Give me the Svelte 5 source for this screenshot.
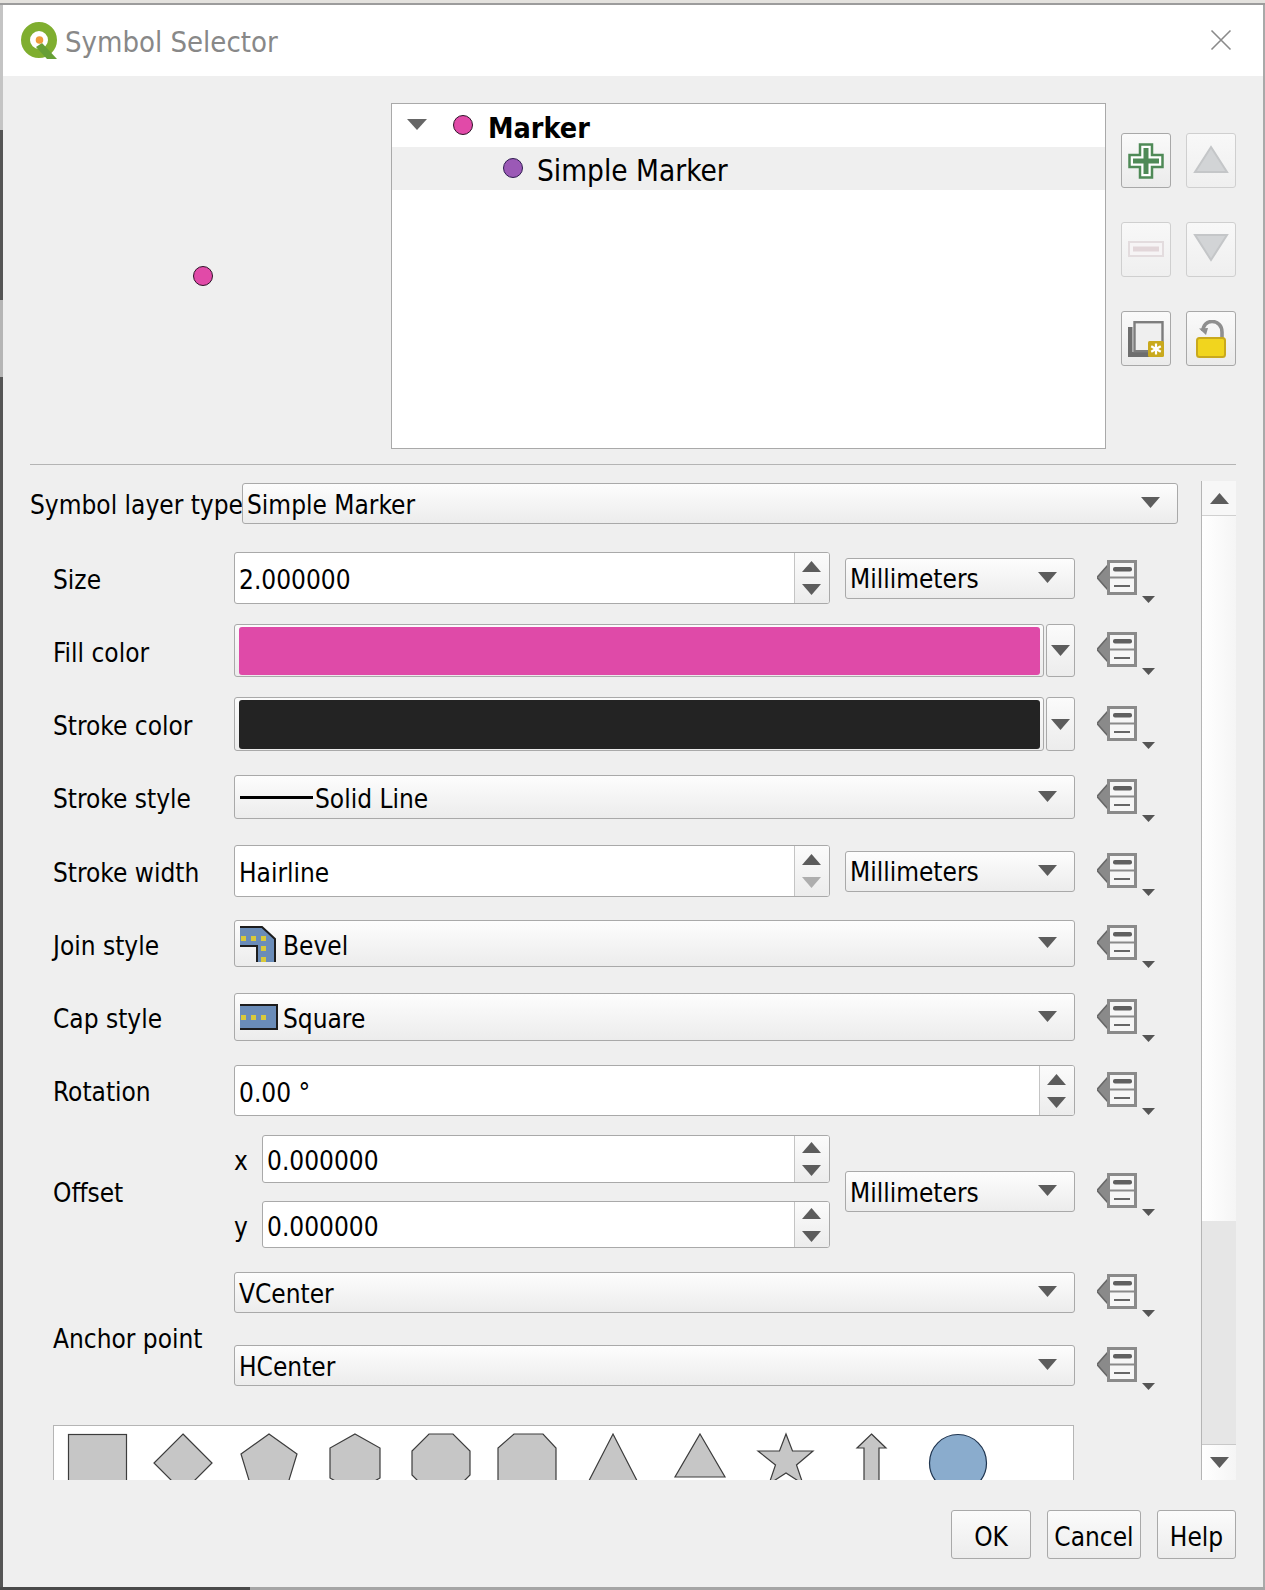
<script>
  const units = ['Millimeters'];
  const stars = '786,1434 792.5,1451 813,1451 796.5,1465 803,1484 786,1473 769,1484 775.5,1465 758,1451 779.5,1451';
</script>

{#snippet arrow(cls = '')}
  <svg class="arrow {cls}" width="19" height="11" viewBox="0 0 19 11"><path d="M0 0H19L9.5 11Z" /></svg>
{/snippet}

{#snippet upArrow(cls = '')}
  <svg class="arrow {cls}" width="19" height="11" viewBox="0 0 19 11"><path d="M0 11H19L9.5 0Z" /></svg>
{/snippet}

{#snippet dd()}
  <svg class="dd" width="58" height="43" viewBox="0 0 58 43">
    <path d="M0 17.5 10.5 5.5V29.5Z" fill="#8a8a8a" />
    <path d="M0 17.5 10.5 5.5" stroke="#666" stroke-width="1.5" fill="none" />
    <path d="M0 17.5 10.5 29.5" stroke="#666" stroke-width="1.5" fill="none" />
    <rect x="11.5" y="1.5" width="27" height="32" fill="#f6f6f6" stroke="#8a8a8a" stroke-width="3" />
    <path d="M11 17.5H39" stroke="#8a8a8a" stroke-width="2" />
    <rect x="16" y="7" width="19" height="4.5" rx="2" fill="#5f5f5f" />
    <rect x="17" y="25" width="16" height="2" fill="#666" />
    <path d="M45 36H58L51.5 43Z" fill="#555" />
  </svg>
{/snippet}

{#snippet spin(disabledDown = false)}
  <div class="spinbtns">
    {@render upArrow()}
    {@render arrow(disabledDown ? 'off' : '')}
  </div>
{/snippet}

{#snippet combo(text, cls = '')}
  <div class="combo {cls}">
    <span class="ctext">{text}</span>
    {@render arrow()}
  </div>
{/snippet}

<div class="window">
  <div class="topedge"></div>
  <header class="titlebar">
    <svg class="logo" width="40" height="40" viewBox="0 0 40 40">
      <circle cx="19" cy="18" r="13.5" fill="none" stroke="#7fae2f" stroke-width="9" />
      <path d="M22 21 L37 37 H27 L16 25Z" fill="#669f35" />
      <circle cx="19.5" cy="18" r="3.8" fill="#ee9a3a" />
    </svg>
    <span class="title">Symbol Selector</span>
    <svg class="close" width="22" height="22" viewBox="0 0 22 22"><path d="M1.5 1.5 20.5 20.5M20.5 1.5 1.5 20.5" stroke="#8a8a8a" stroke-width="1.6" fill="none" /></svg>
  </header>

  <section class="top">
    <div class="preview"><span class="pdot pink big"></span></div>
    <div class="tree">
      <div class="titem">
        <svg class="twisty" width="20" height="11" viewBox="0 0 20 11"><path d="M0 0H20L10 11Z" fill="#666" /></svg>
        <span class="pdot pink"></span>
        <b>Marker</b>
      </div>
      <div class="titem sel">
        <span class="pdot purple"></span>
        <span>Simple Marker</span>
      </div>
    </div>
    <div class="tools">
      <button class="tool">
        <svg width="36" height="36" viewBox="0 0 36 36"><path d="M12 1.5H24V12H34.5V24H24V34.5H12V24H1.5V12H12Z" fill="#fff" stroke="#4f8a57" stroke-width="2.5" /><path d="M15.5 5H20.5V15.5H31V20.5H20.5V31H15.5V20.5H5V15.5H15.5Z" fill="#4f8a57" /></svg>
      </button>
      <button class="tool off">
        <svg class="lift-sm" width="36" height="30" viewBox="0 0 36 30"><path d="M18 2 34 27H2Z" fill="#d2d4d6" stroke="#c4c6c8" stroke-width="2" /></svg>
      </button>
      <button class="tool off">
        <svg class="lift-sm" width="36" height="16" viewBox="0 0 36 16"><rect x="1" y="1" width="34" height="14" fill="#f6f4f5" stroke="#e3dcde" stroke-width="2" /><rect x="5" y="5.5" width="26" height="5" fill="#e2d6d9" /></svg>
      </button>
      <button class="tool off">
        <svg class="lift" width="36" height="30" viewBox="0 0 36 30"><path d="M2 3H34L18 28Z" fill="#d2d4d6" stroke="#c4c6c8" stroke-width="2" /></svg>
      </button>
      <button class="tool">
        <svg width="36" height="36" viewBox="0 0 36 36"><path d="M0 6H4.5V31H22V36H0Z" fill="#6e6e6e" /><rect x="6.5" y="1.2" width="28" height="29" fill="#efefef" stroke="#7d7d7d" stroke-width="2.4" /><rect x="20" y="20" width="16" height="16" rx="1.5" fill="#c9a91d" /><path d="M28 22.5V33.5M23.2 25.2 32.8 30.8M32.8 25.2 23.2 30.8" stroke="#fff" stroke-width="2.2" /></svg>
      </button>
      <button class="tool">
        <svg width="30" height="38" viewBox="0 0 30 38"><path d="M7 11C7 5 11 1.5 16 1.5C22 1.5 26 6 26 12V19" fill="none" stroke="#8f8f8f" stroke-width="3.6" /><path d="M3 8.5 10 15 12 8Z" fill="#8f8f8f" /><rect x="1" y="18" width="28" height="19" rx="2.5" fill="#f1d51e" stroke="#c9a91d" stroke-width="2" /></svg>
      </button>
    </div>
  </section>

  <hr class="sep" />

  <section class="panel">
    <div class="scrollarea">
      <div class="typerow">
        <span class="typelabel">Symbol layer type</span>
        {@render combo('Simple Marker', 'typecombo')}
      </div>

      <div class="form">
        <div class="row r-size">
          <span class="lbl">Size</span>
          <div class="fieldpair">
            <div class="spinbox"><span class="val">2.000000</span>{@render spin()}</div>
            {@render combo(units[0], 'unit')}
          </div>
          {@render dd()}
        </div>

        <div class="row r-fill">
          <span class="lbl">Fill color</span>
          <div class="colorbtn">
            <div class="swatchwrap"><div class="swatch fillc"></div></div>
            <div class="colordrop">{@render arrow()}</div>
          </div>
          {@render dd()}
        </div>

        <div class="row r-stroke">
          <span class="lbl">Stroke color</span>
          <div class="colorbtn">
            <div class="swatchwrap"><div class="swatch strokec"></div></div>
            <div class="colordrop">{@render arrow()}</div>
          </div>
          {@render dd()}
        </div>

        <div class="row r-style">
          <span class="lbl">Stroke style</span>
          <div class="combo tall">
            <span class="ctext withicon"><i class="line"></i>Solid Line</span>
            {@render arrow()}
          </div>
          {@render dd()}
        </div>

        <div class="row r-width">
          <span class="lbl">Stroke width</span>
          <div class="fieldpair">
            <div class="spinbox"><span class="val">Hairline</span>{@render spin(true)}</div>
            {@render combo(units[0], 'unit')}
          </div>
          {@render dd()}
        </div>

        <div class="row r-join">
          <span class="lbl">Join style</span>
          <div class="combo tall">
            <span class="ctext withicon">
              <svg class="styleicon bevel" width="36" height="36" viewBox="0 0 36 36">
                <path d="M0 1H22L35 13V36H18V20H0Z" fill="#6a8cb8" />
                <path d="M0 1H22L35 13V36M17 36V20H0" fill="none" stroke="#1d1d1d" stroke-width="2" />
                <rect x="1" y="10" width="5" height="5" fill="#d8c93a" /><rect x="11" y="10" width="5" height="5" fill="#d8c93a" /><rect x="21" y="10" width="5" height="5" fill="#d8c93a" /><rect x="21" y="20" width="5" height="5" fill="#d8c93a" /><rect x="21" y="31" width="5" height="5" fill="#d8c93a" />
              </svg>
              Bevel
            </span>
            {@render arrow()}
          </div>
          {@render dd()}
        </div>

        <div class="row r-cap">
          <span class="lbl">Cap style</span>
          <div class="combo tall">
            <span class="ctext withicon">
              <svg class="styleicon" width="38" height="26" viewBox="0 0 38 26">
                <rect x="-2" y="1" width="39" height="24" fill="#6a8cb8" stroke="#1d1d1d" stroke-width="2" />
                <rect x="1" y="11" width="5" height="5" fill="#d8c93a" /><rect x="11" y="11" width="5" height="5" fill="#d8c93a" /><rect x="21" y="11" width="5" height="5" fill="#d8c93a" />
              </svg>
              Square
            </span>
            {@render arrow()}
          </div>
          {@render dd()}
        </div>

        <div class="row r-rot">
          <span class="lbl">Rotation</span>
          <div class="spinbox wide"><span class="val">0.00 °</span>{@render spin()}</div>
          {@render dd()}
        </div>

        <div class="row r-offset">
          <span class="lbl">Offset</span>
          <div class="fieldpair">
            <div class="xy">
              <div class="xyrow"><span class="axis">x</span><div class="spinbox"><span class="val">0.000000</span>{@render spin()}</div></div>
              <div class="xyrow"><span class="axis">y</span><div class="spinbox"><span class="val">0.000000</span>{@render spin()}</div></div>
            </div>
            {@render combo(units[0], 'unit')}
          </div>
          {@render dd()}
        </div>

        <div class="row r-anchor">
          <span class="lbl">Anchor point</span>
          <div class="anchors">
            <div class="anchorrow">{@render combo('VCenter')}{@render dd()}</div>
            <div class="anchorrow">{@render combo('HCenter')}{@render dd()}</div>
          </div>
        </div>

        <div class="symbols">
          <svg width="1020" height="55" viewBox="54 1426 1020 55">
            <g fill="#c6c6c6" stroke="#3c3c3c" stroke-width="1.2">
              <rect x="68.5" y="1434.5" width="58" height="58" />
              <path d="M183 1434 212 1463 183 1492 154 1463Z" />
              <path d="M269 1434 297 1454 286 1490H252L241 1454Z" />
              <path d="M355 1434 380 1448V1478L355 1492 330 1478V1448Z" />
              <path d="M429 1434H453L470 1451V1475L453 1492H429L412 1475V1451Z" />
              <path d="M514 1434H543L556 1448V1490H498V1448Z" />
              <path d="M613 1434 649 1504H577Z" />
              <path d="M700 1434 725 1477H675Z" />
              <polygon points={stars} />
              <path d="M871.5 1434 886 1448H879V1500H864V1448H857Z" />
              <circle cx="958" cy="1463" r="28.5" fill="#8aaccd" stroke="#1f3550" />
            </g>
          </svg>
        </div>
      </div>
    </div>

    <div class="scrollbar">
      <div class="sbtn first">{@render upArrow()}</div>
      <div class="track"></div>
      <div class="thumb"></div>
      <div class="sbtn last">{@render arrow()}</div>
    </div>
  </section>

  <footer class="buttons">
    <button class="btn ok"><span>OK</span></button>
    <button class="btn cancel"><span>Cancel</span></button>
    <button class="btn help"><span>Help</span></button>
  </footer>

  <div class="ledge"></div>
  <div class="redge"></div>
  <div class="bottomedge"><i></i></div>
</div>

<style>
  :global(body) { margin: 0; background: #efefef; }
  .window {
    box-sizing: border-box;
    position: relative;
    width: 1265px;
    height: 1590px;
    overflow: hidden;
    background: #efefef;
    padding-left: 2px;
    font-family: "DejaVu Sans", sans-serif;
    font-stretch: condensed;
    font-size: 26px;
    color: #000;
    display: flex;
    flex-direction: column;
  }
  button { font: inherit; color: inherit; padding: 0; cursor: default; }
  .topedge {
    position: absolute;
    left: 0;
    right: 0;
    top: 0;
    height: 5px;
    background: linear-gradient(#e4e2de 0 3px, #9c9c9c 3px 5px);
  }
  .titlebar {
    height: 71px;
    margin-top: 5px;
    background: #fff;
    display: flex;
    align-items: center;
    padding-left: 18px;
    flex: none;
  }
  .logo { flex: none; margin-top: 2px; }
  .title { color: #888; font-size: 29px; margin-left: 5px; padding-top: 2px; }
  .close { margin-left: auto; margin-right: 33px; margin-top: -1px; }

  .top {
    display: flex;
    height: 346px;
    margin-top: 27px;
    flex: none;
  }
  .preview {
    width: 389px;
    flex: none;
    position: relative;
  }
  .pdot {
    display: inline-block;
    box-sizing: border-box;
    width: 20px;
    height: 20px;
    border-radius: 50%;
    border: 1px solid #2f1328;
    flex: none;
  }
  .pink { background: #e14aa8; }
  .purple { background: #9b59b6; border-color: #2f1b50; }
  .big { position: absolute; left: 191px; top: 163px; }

  .tree {
    box-sizing: border-box;
    width: 715px;
    height: 346px;
    background: #fff;
    border: 1px solid #a9a9a9;
    flex: none;
  }
  .titem {
    height: 43px;
    display: flex;
    align-items: center;
    position: relative;
  }
  .titem:first-child { padding-left: 15px; }
  .titem b { font-weight: 700; font-size: 28.5px; margin-left: 15px; padding-top: 6px; }
  .twisty { margin-right: 26px; margin-top: -2px; }
  .titem:first-child .pdot { margin-top: -2px; }
  .sel { background: #efefef; padding-left: 111px; }
  .sel .pdot { margin-right: 14px; margin-top: -2px; }
  .sel span:last-child { font-size: 29.5px; padding-top: 5px; }

  .tools {
    margin-left: 15px;
    margin-top: 30px;
    display: grid;
    grid-template-columns: 50px 50px;
    grid-auto-rows: 55px;
    column-gap: 15px;
    row-gap: 34px;
    align-content: start;
  }
  .tool {
    box-sizing: border-box;
    border: 1px solid #a8a8a8;
    border-radius: 3px;
    background: linear-gradient(#fafafa, #ebebeb);
    display: flex;
    align-items: center;
    justify-content: center;
  }
  .tool.off { border-color: #cfcfcf; background: linear-gradient(#f8f8f8, #efefef); }
  .lift-sm { margin-bottom: 2px; }
  .lift { margin-bottom: 6px; }

  .sep {
    border: 0;
    height: 1px;
    background: #b4b4b4;
    margin: 15px 29px 0 28px;
    flex: none;
  }

  .panel {
    display: flex;
    height: 999px;
    margin-top: 16px;
    flex: none;
  }
  .scrollarea {
    width: 1199px;
    padding-left: 28px;
    box-sizing: border-box;
    flex: none;
    overflow: hidden;
  }
  .typerow { display: flex; align-items: center; height: 42px; margin-top: 1px; }
  .typelabel { width: 212px; flex: none; white-space: nowrap; padding-top: 4px; }
  .lbl, .val, .axis, .ctext { padding-top: 4px; }
  .combo {
    box-sizing: border-box;
    height: 41px;
    display: flex;
    align-items: center;
    justify-content: space-between;
    border: 1px solid #a9a9a9;
    border-radius: 3px;
    background: linear-gradient(#fdfdfd, #ececec);
    padding: 0 17px 0 4px;
    flex: 1;
    min-width: 0;
  }
  .combo .arrow { flex: none; margin-top: -2px; }
  .typecombo { flex: none; width: 936px; height: 41px; }
  .combo.unit { flex: none; width: 230px; height: 41px; }
  .combo.tall { height: 100%; }
  .ctext { white-space: nowrap; display: flex; align-items: center; }
  .unit .ctext, .anchorrow .ctext { padding-top: 2px; }
  .line { display: block; width: 73px; height: 3px; background: #000; margin: -4px 2px 0 1px; }
  .styleicon { flex: none; margin: -4px 5px 0 1px; }
  .styleicon.bevel { margin-right: 7px; }

  .arrow path { fill: #5c5c5c; }
  .arrow.off path { fill: #aeaeae; }

  .form { padding-left: 23px; }
  .row {
    display: grid;
    grid-template-columns: 181px 841px 80px;
    grid-template-rows: 100%;
    align-items: center;
  }
  .row > :global(.dd), .anchorrow > :global(.dd) { margin-left: 22px; transform: translateY(3px); flex: none; }

  .r-size { height: 52px; margin-top: 28px; }
  .r-fill { height: 53px; margin-top: 20px; }
  .r-stroke { height: 54px; margin-top: 20px; }
  .r-style { height: 44px; margin-top: 24px; }
  .r-width { height: 52px; margin-top: 26px; }
  .r-join { height: 47px; margin-top: 23px; }
  .r-cap { height: 48px; margin-top: 26px; }
  .r-rot { height: 51px; margin-top: 24px; }
  .r-rot .lbl, .r-offset .lbl { padding-top: 2px; }
  .r-offset { height: 113px; margin-top: 19px; }
  .r-anchor { height: 114px; margin-top: 24px; grid-template-columns: 181px 921px; }
  .r-anchor .lbl { padding-top: 20px; }

  .fieldpair {
    display: flex;
    align-items: center;
    gap: 15px;
    height: 100%;
  }
  .spinbox {
    box-sizing: border-box;
    height: 100%;
    width: 596px;
    flex: none;
    background: #fff;
    border: 1px solid #a9a9a9;
    border-radius: 3px;
    display: flex;
    align-items: center;
    justify-content: space-between;
    padding-left: 4px;
  }
  .spinbox.wide { width: 841px; }
  .spinbtns {
    box-sizing: border-box;
    width: 35px;
    height: 100%;
    flex: none;
    border-left: 1px solid #c4c4c4;
    padding-right: 1px;
    background: linear-gradient(#fbfbfb, #ececec);
    border-radius: 0 2px 2px 0;
    display: flex;
    flex-direction: column;
    align-items: center;
    justify-content: center;
    gap: 12px;
  }
  .colorbtn {
    display: flex;
    gap: 2px;
    height: 100%;
  }
  .swatchwrap {
    box-sizing: border-box;
    flex: 1;
    border: 1px solid #a9a9a9;
    border-radius: 3px;
    background: linear-gradient(#fbfbfb, #ececec);
    padding: 2px 3px 1px 4px;
  }
  .swatch { height: 100%; border-radius: 3px; }
  .fillc { background: #df4aa8; }
  .strokec { background: #232323; }
  .colordrop {
    box-sizing: border-box;
    width: 29px;
    flex: none;
    border: 1px solid #a9a9a9;
    border-radius: 3px;
    background: linear-gradient(#fbfbfb, #ececec);
    display: flex;
    align-items: center;
    justify-content: center;
  }
  .xy { display: flex; flex-direction: column; gap: 18px; width: 596px; flex: none; height: 100%; }
  .xyrow { display: flex; align-items: center; height: 48px; flex: none; }
  .xyrow:last-child { height: 47px; }
  .axis { width: 28px; flex: none; }
  .xyrow .spinbox { width: 568px; }
  .anchors { display: flex; flex-direction: column; justify-content: space-between; height: 100%; }
  .anchorrow { display: flex; align-items: center; height: 41px; width: 921px; }
  .anchorrow .combo { width: 841px; flex: none; height: 41px; }

  .symbols {
    box-sizing: border-box;
    width: 1021px;
    height: 56px;
    margin-top: 39px;
    background: #fff;
    border: solid #b5b5b5;
    border-width: 1px 1px 0 1px;
    overflow: hidden;
  }
  .symbols svg { display: block; }

  .scrollbar {
    box-sizing: border-box;
    width: 35px;
    height: 999px;
    border-left: 1px solid #b5b5b5;
    display: flex;
    flex-direction: column;
    position: relative;
    background: linear-gradient(90deg, #fff, #f5f5f5);
  }
  .sbtn { height: 34px; flex: none; display: flex; align-items: center; justify-content: center; }
  .sbtn.first { border-bottom: 1px solid #d0d0d0; background: #f7f7f7; }
  .track { height: 705px; flex: none; }
  .thumb { flex: 1; background: #e6e6e6; border-bottom: 1px solid #c8c8c8; }
  .sbtn.last { height: 35px; background: linear-gradient(90deg, #fff, #f5f5f5); }

  .buttons {
    display: flex;
    justify-content: flex-end;
    height: 49px;
    margin-top: 30px;
    padding-right: 29px;
    gap: 16px;
    flex: none;
  }
  .btn {
    box-sizing: border-box;
    border: 1px solid #a9a9a9;
    border-radius: 3px;
    background: linear-gradient(#fbfbfb, #ececec);
    flex: none;
    display: flex;
    align-items: center;
    justify-content: center;
  }
  .btn span { padding-top: 4px; }
  .ok { width: 80px; }
  .cancel { width: 94px; }
  .help { width: 79px; }

  .ledge {
    position: absolute;
    left: 0;
    top: 5px;
    bottom: 0;
    width: 3px;
    background: linear-gradient(#c4c4c4 0 125px, #555 125px 295px, #b5b5b5 295px 372px, #555 372px);
  }
  .redge {
    position: absolute;
    right: 0;
    top: 5px;
    bottom: 0;
    width: 2px;
    background: #a9a9a9;
  }
  .bottomedge {
    position: absolute;
    left: 0;
    right: 0;
    bottom: 0;
    height: 3px;
    background: #a5a5a5;
  }
  .bottomedge i { display: block; width: 250px; height: 3px; background: #4a4a4a; }
</style>
